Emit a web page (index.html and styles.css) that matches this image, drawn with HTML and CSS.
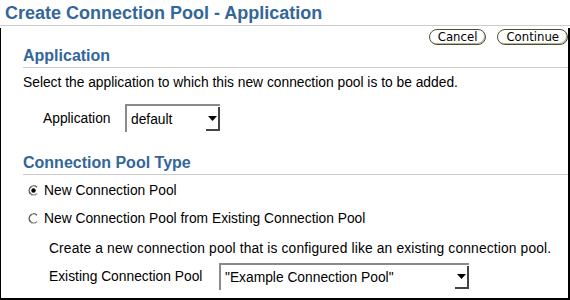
FILE: index.html
```html
<!DOCTYPE html>
<html>
<head>
<meta charset="utf-8">
<link rel="stylesheet" href="styles.css">
</head>
<body>
<div class="page">
  <h1 class="title">Create Connection Pool - Application</h1>
  <div class="frame">
    <div class="buttons">
      <span class="btn">Cancel</span>
      <span class="btn">Continue</span>
    </div>
    <div class="section first">
      <h2 class="heading">Application</h2>
      <p class="desc">Select the application to which this new connection pool is to be added.</p>
      <div class="field app-field">
        <span class="label">Application</span>
        <div class="select app-select"><span class="val">default</span><span class="arrow"><svg width="9" height="5" viewBox="0 0 9 5"><path d="M0 0H9L4.5 5Z" fill="#000"/></svg></span></div>
      </div>
    </div>
    <div class="section second-sec">
      <h2 class="heading">Connection Pool Type</h2>
      <div class="radio-row">
        <span class="radio"><svg width="11" height="11" viewBox="0 0 11 11"><path d="M9 2.2A4.6 4.6 0 1 0 9 8.8" fill="none" stroke="#555" stroke-width="1.4"/><path d="M2 9A4.6 4.6 0 0 0 9.5 8.5" fill="none" stroke="#ccc" stroke-width="1"/><circle cx="5.5" cy="5.5" r="2.2" fill="#000"/></svg></span>
        <span class="rlabel">New Connection Pool</span>
      </div>
      <div class="radio-row second">
        <span class="radio"><svg width="11" height="11" viewBox="0 0 11 11"><path d="M9 2.2A4.6 4.6 0 1 0 9 8.8" fill="none" stroke="#555" stroke-width="1.4"/><path d="M2 9A4.6 4.6 0 0 0 9.5 8.5" fill="none" stroke="#ccc" stroke-width="1"/></svg></span>
        <span class="rlabel">New Connection Pool from Existing Connection Pool</span>
      </div>
      <p class="desc sub">Create a new connection pool that is configured like an existing connection pool.</p>
      <div class="field pool-field">
        <span class="label">Existing Connection Pool</span>
        <div class="select pool-select"><span class="val">"Example Connection Pool"</span><span class="arrow"><svg width="9" height="5" viewBox="0 0 9 5"><path d="M0 0H9L4.5 5Z" fill="#000"/></svg></span></div>
      </div>
    </div>
  </div>
</div>
</body>
</html>
```
FILE: styles.css
```css
html, body {
  margin: 0;
  padding: 0;
  background: #fff;
}
body {
  width: 570px;
  height: 300px;
  overflow: hidden;
  font-family: "Liberation Sans", Arial, sans-serif;
  font-size: 13.8px;
  color: #000;
}
.page {
  width: 570px;
  height: 300px;
  display: flex;
  flex-direction: column;
}
.title {
  margin: 0;
  padding: 3px 0 0 5px;
  height: 22px;
  box-sizing: content-box;
  font-size: 18px;
  font-weight: bold;
  color: #336699;
  border-bottom: 1px solid #cccccc;
  line-height: 20px;
}
.frame {
  flex: 1;
  margin-top: 2px;
  border-left: 1px solid #000;
  border-right: 2px solid #000;
  border-bottom: 2px solid #000;
}
.buttons {
  display: flex;
  justify-content: flex-end;
  align-items: flex-start;
  gap: 11px;
  padding: 1px 0 0 0;
  height: 18px;
}
.btn {
  font-family: "DejaVu Sans Condensed", "DejaVu Sans", sans-serif;
  font-stretch: condensed;
  font-size: 13px;
  line-height: 14px;
  padding: 0 8px;
  border: 1px solid #4d4d33;
  border-radius: 8px;
  box-shadow: inset -1px -1px 0 #b3b399;
  background: #fff;
}
.section {
  padding-left: 22px;
}
.heading {
  margin: 0;
  font-size: 16px;
  font-weight: bold;
  color: #336699;
  border-bottom: 1px solid #cccccc;
  line-height: 18px;
  padding-bottom: 2px;
}
.desc {
  margin: 7px 0 0 0;
  line-height: 16px;
}
.field {
  display: flex;
  align-items: center;
}
.app-field {
  margin-top: 13px;
  padding-left: 20px;
}
.app-field .label {
  width: 82px;
}
.select {
  box-sizing: border-box;
  border-top: 2px solid #8a8a8a;
  border-left: 2px solid #8a8a8a;
  display: flex;
  align-items: stretch;
}
.select .val {
  flex: 1;
  padding-left: 4px;
  display: flex;
  align-items: center;
}
.select .arrow {
  width: 12px;
  margin: 1px 0 1px 0;
  border-right: 2px solid #444;
  border-bottom: 2px solid #444;
  display: flex;
  align-items: center;
  justify-content: center;
}
.app-select {
  width: 95px;
  height: 28px;
}
.second-sec {
  margin-top: 22px;
}
.radio-row {
  display: flex;
  align-items: center;
  margin-top: 7px;
  padding-left: 5px;
  height: 16px;
}
.radio-row.second {
  margin-top: 12px;
}
.radio {
  width: 11px;
  height: 11px;
  margin-right: 5px;
  display: flex;
}
.sub {
  margin-top: 15px;
  padding-left: 26px;
  letter-spacing: 0.15px;
}
.pool-field {
  margin-top: 6px;
  padding-left: 26px;
}
.pool-field .label {
  width: 170px;
}
.pool-select {
  width: 250px;
  height: 27px;
}
```
